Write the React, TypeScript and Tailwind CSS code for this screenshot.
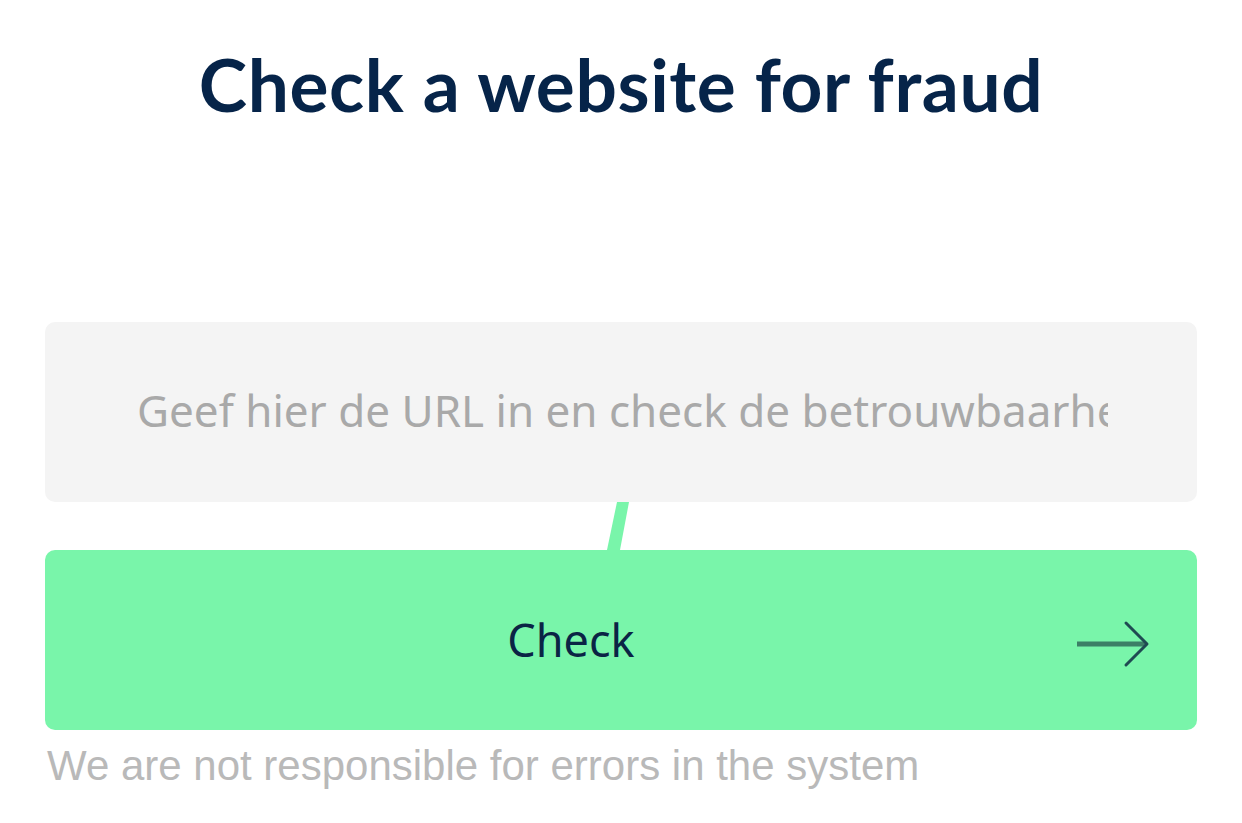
import React from "react";

export default function App() {
  return (
    <div className="w-[1242px] h-[823px] bg-white overflow-hidden">
      <div className="px-[45px] flex flex-col">
        <h1
          className="text-center text-[73px] leading-none font-bold text-[#062449] pt-[48px] tracking-[0.6px]"
          style={{ fontFamily: "Lato, 'Open Sans', sans-serif" }}
        >
          Check a website for fraud
        </h1>
        <div className="relative mt-[201px]">
          <div className="h-[180px] rounded-[10px] bg-[#f4f4f4] flex items-center pl-[92px] pr-[89px] pb-[4px]">
            <input
              type="text"
              placeholder="Geef hier de URL in en check de betrouwbaarheid"
              className="w-full bg-transparent outline-none text-[44px] text-[#333] placeholder:text-[#a9a9a9]"
              style={{ fontFamily: "'Noto Sans', 'Open Sans', sans-serif" }}
            />
          </div>
          <svg
            className="absolute left-[555px] top-[180px]"
            width="30"
            height="48"
            viewBox="0 0 30 48"
          >
            <polygon points="17,0 29,0 20,48 7,48" fill="#79f5aa" />
          </svg>
          <button className="relative mt-[48px] w-full h-[180px] rounded-[10px] bg-[#79f5aa] flex items-center justify-center">
            <span
              className="text-[45px] text-[#0a2445] mr-[100px]"
              style={{ fontFamily: "'Noto Sans', 'Open Sans', sans-serif" }}
            >
              Check
            </span>
            <svg
              className="absolute right-[46px] top-[66px]"
              width="76"
              height="54"
              viewBox="0 0 76 54"
              fill="none"
            >
              <path d="M2 28 H71" stroke="#3c7f66" strokeWidth="5" />
              <path
                d="M51 7 L72 28 L51 49"
                stroke="#1f4a52"
                strokeWidth="3"
                strokeLinecap="round"
                strokeLinejoin="round"
              />
            </svg>
          </button>
        </div>
        <p
          className="mt-[15px] ml-[2px] text-[42px] leading-none text-[#b9b9b9]"
          style={{ fontFamily: "'Liberation Sans', Arial, sans-serif" }}
        >
          We are not responsible for errors in the system
        </p>
      </div>
    </div>
  );
}
